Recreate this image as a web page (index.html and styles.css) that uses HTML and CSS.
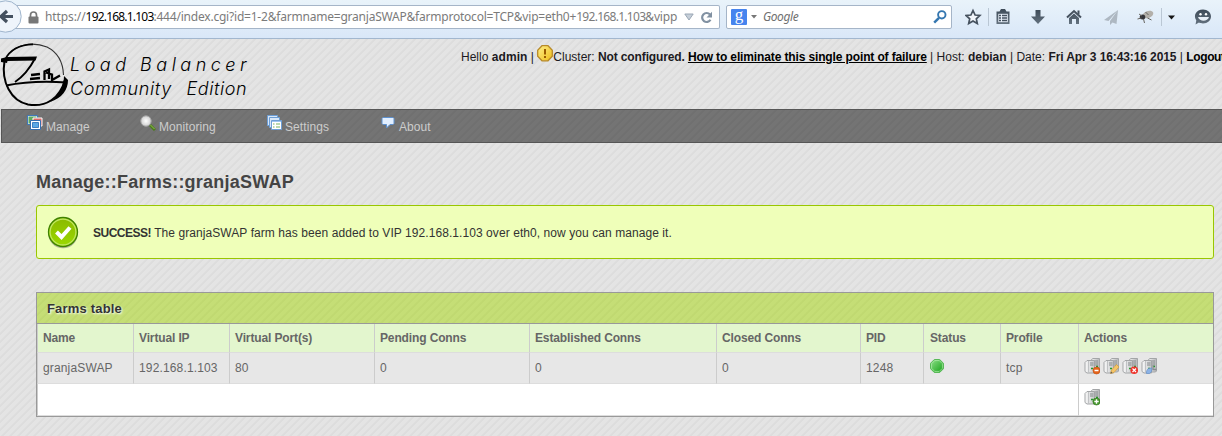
FILE: index.html
```html
<!DOCTYPE html>
<html lang="en">
<head>
<meta charset="utf-8">
<title>Zen Load Balancer</title>
<link rel="stylesheet" href="styles.css">
</head>
<body>
<svg class="defs" width="0" height="0">
  <defs>
    <linearGradient id="steel" x1="0" x2="0" y1="0" y2="1"><stop offset="0" stop-color="#3e4b58"/><stop offset="1" stop-color="#64727f"/></linearGradient>
    <linearGradient id="box" x1="0" x2="1"><stop offset="0" stop-color="#f4f4f4"/><stop offset="1" stop-color="#b2b4b6"/></linearGradient>
    <linearGradient id="front" x1="0" x2="1"><stop offset="0" stop-color="#fafafa"/><stop offset="1" stop-color="#c4c6c8"/></linearGradient>
    <linearGradient id="lime" x1="0" x2="0" y1="0" y2="1"><stop offset="0" stop-color="#8ab900"/><stop offset="1" stop-color="#9bd900"/></linearGradient>
    <linearGradient id="led" x1="0" x2="1" y1="0" y2="1"><stop offset="0" stop-color="#8fe08a"/><stop offset="1" stop-color="#14a016"/></linearGradient>
    <radialGradient id="lens"><stop offset="0" stop-color="#fff"/><stop offset="1" stop-color="#cfcfcf"/></radialGradient>
    <linearGradient id="gold" x1="0" x2="1" y1="0" y2="1"><stop offset="0" stop-color="#fff08a"/><stop offset="1" stop-color="#eebb18"/></linearGradient>
    <g id="servers">
      <path d="M7.500 1.500 9 .5h6.500V13l-1 1h-7z" fill="url(#box)" stroke="#a3a5a7"/>
      <path d="M10.500 3H14M10.500 5H14M10.500 7H14" stroke="#85898c"/>
      <path d="M1 4.500 3 2.500h7.500V15H3l-2-1.500z" fill="url(#front)" stroke="#a3a5a7"/>
      <path d="M4.500 3v12" stroke="#c0c2c4"/>
      <path d="M6 5h3.500M6 7h3.500" stroke="#85898c"/>
      <path d="M7 10.500h2M12 8.500h2" stroke="#249a2c" stroke-width="1.700" fill="none"/>
    </g>
  </defs>
</svg>

<div class="toolbar">
  <div class="address">
    <svg class="lock" width="11" height="13" viewBox="0 0 11 13"><path d="M2.500 7V4a3 3 0 0 1 6 0v3" fill="none" stroke="#777" stroke-width="1.700"/><rect x=".5" y="5.500" width="10" height="7" rx="1" fill="#777"/></svg>
    <div class="url"><span class="scheme">https://</span><b>192.168.1.103</b>:444/index.cgi?id=1-2&amp;farmname=granjaSWAP&amp;farmprotocol=TCP&amp;vip=eth0+<span class="ip">192.168.1.103</span>&amp;vipp</div>
    <svg class="drop" width="10" height="8" viewBox="0 0 10 8"><path d="M.8 1h8.400L5 7z" fill="#c5ced8" stroke="#9aa7b5"/></svg>
    <svg class="reload" width="13" height="13" viewBox="0 0 13 13"><path d="M10 3.500A4.500 4.500 0 1 0 10.500 8.800" fill="none" stroke="#8191a2" stroke-width="2.200"/><path d="M12 .8v5.700H6.500z" fill="#8191a2"/></svg>
  </div>
  <svg class="back" width="23" height="36" viewBox="0 0 23 36"><circle cx="5.500" cy="16.500" r="15.700" fill="#eef4fb" stroke="#9eb4cc"/><path d="M13 16.500H1M7 11l-6 5.500L7 22" fill="none" stroke="#44505f" stroke-width="3.200"/></svg>
  <div class="search">
    <span class="engine">g</span>
    <svg width="6" height="4" viewBox="0 0 6 4"><path d="M0 0h6L3 3.500z" fill="#777"/></svg>
    <span class="hint">Google</span>
    <svg width="14" height="14" viewBox="0 0 14 14"><circle cx="8.800" cy="4.800" r="3.700" fill="none" stroke="#3577b0" stroke-width="1.900"/><path d="M6 7.800 1.200 12.600" stroke="#3577b0" stroke-width="2.500"/></svg>
  </div>
  <svg class="tools" width="257" height="30" viewBox="0 0 257 30">
    <g fill="url(#steel)">
      <path d="M8 5.500l2.100 4.500 4.800.5-3.600 3.300 1 4.700-4.300-2.500-4.300 2.500 1-4.700L1.100 10.500l4.800-.5z" fill="#f2f6fb" stroke="#46525f" stroke-width="1.700"/>
      <path d="M31.500 6.500h3l1.500-2.500h4l1.500 2.500h3V19h-13z"/><path d="M33.300 8.800h9.500v8.400h-9.500z" fill="#e7eff8"/><path d="M34 10.500h2m1 0h5m-8 2.500h2m1 0h5m-8 2.500h2m1 0h5" stroke="#46525f" stroke-width="1.500"/>
      <path d="M70.500 5h5v6.500H80L73 19l-7-7.500h4.500z"/>
      <path d="M102 12.500 109 6l7 6.500" fill="none" stroke="#46525f" stroke-width="2"/><path d="M104 13 109 8.500l5 4.500v6h-3v-5h-4v5h-3zM112.500 5.500h2v4h-2z"/>
      <path d="M153 5 139 15l4.500 1zM153 5l-8 11v4l2.500-2.500 4 1.500z" fill="#aeb8c2"/>
      <ellipse cx="183" cy="9.500" rx="5.500" ry="3.500" transform="rotate(-20 183 9.500)" fill="#b3b0aa"/><ellipse cx="177.500" cy="12" rx="2.800" ry="2.500" fill="#34353a"/>
      <path d="M174 9l3 2M172.500 14l4-1m2 1 1 4m3-5 4 2m-6-8 3 3" stroke="#66645f" fill="none"/>
      <path d="M203 10.500h7l-3.500 4z" fill="#151515"/>
      <path d="M238 4.500c4.500 0 8 3 8 7s-3.500 7-8 7c-1.500 0-3-.3-4-.9l-3.500 1.900.8-4C228 10.500 231 4.500 238 4.500z"/>
      <circle cx="235.500" cy="9.300" r="1.200" fill="#fff"/><circle cx="241" cy="9.300" r="1.200" fill="#fff"/><path d="M233 12h11c-1.500 5-9.500 5-11 0z" fill="#e8eff7"/>
    </g>
    <path d="M23.500 3v18M196.500 3v18" stroke="#bac7d4"/>
  </svg>
</div>

<div class="header">
  <svg class="logo" width="70" height="66" viewBox="0 0 70 66">
    <path d="M9 11C17 1 33-1.500 47 4c10 5 16 15 16.500 28" fill="none" stroke="#333" stroke-width="1.100"/>
    <path d="M5 17C9 7 20 1.500 33 1.300" fill="none" stroke="#000" stroke-width="1.700"/>
    <path d="M4.500 18C1 39 11 58 28 61.500c18 3 32-6 37-25" fill="none" stroke="#000" stroke-width="2"/>
    <path d="M64 33c0 10-4 19-14 26 12-4 18-12 18-22z"/>
    <path d="M1 15.500 7 14l30-.5-1.500 4-28 .5-.5 2-6-1z"/>
    <path d="M35 15.500C30 25 24 33 15 39M6 42.500c17-3.500 40-4.500 61-3" fill="none" stroke="#000" stroke-width="1.900"/>
    <path d="M31 32l9-1m-10 5 10-1M44.500 37V28.500l4.500-2V36M46 29.500l6 2v5.500l8-4.500" fill="none" stroke="#000" stroke-width="2.300"/>
  </svg>
  <div class="brand"><div class="brand-top">Load Balancer</div><div class="brand-sub">Community Edition</div></div>
  <div class="status">Hello <b class="user">admin</b> | <svg class="warn" width="16" height="17" viewBox="0 0 16 17"><path d="M5 .7h6l4.300 4.500v6L11 15.800H5L.7 11.200v-6z" fill="url(#gold)" stroke="#b88a28" stroke-width="1.300"/><path d="M8 4v5.500M8 11v2" stroke="#9a5b00" stroke-width="2"/></svg>Cluster: <b class="cluster">Not configured. <a>How to eliminate this single point of failure</a></b> | Host: <b>debian</b> | Date: <b class="date">Fri Apr 3 16:43:16 2015</b> | <b class="logout">Logout</b></div>
</div>

<div class="nav">
  <div class="item manage"><svg width="16" height="16" viewBox="0 0 16 16"><path d="M1 1h9v8H1z" fill="#62a961" stroke="#e8f1fb"/><path d="M.5.500h10v9H.5z" fill="none" stroke="#3f79ba"/><path d="M6 3h9v8H6z" fill="#d96a6a" stroke="#fff"/><path d="M3.500 5.500h10v9h-10z" fill="#fff" stroke="#356eae"/><path d="M5.500 7.500h6v5h-6z" fill="#5ba8e4" stroke="#3b7fc2"/></svg>Manage</div>
  <div class="item monitoring"><svg width="16" height="16" viewBox="0 0 16 16"><path d="M10 10l5 5" stroke="#4c7c1d" stroke-width="3"/><path d="M10.500 10l4 4" stroke="#92bd54"/><circle cx="6" cy="6" r="5.200" fill="url(#lens)" stroke="#a4a4a4"/></svg>Monitoring</div>
  <div class="item settings"><svg width="15" height="16" viewBox="0 0 15 16"><g fill="#d8e7f9" stroke="#6d9ed5"><path d="M.5.500h10v10H.5z"/><path d="M2.500 2.500h10v10h-10z"/><path d="M4.500 5.500h10v9h-10z" fill="#fff"/></g><path d="M5 6.500h9" stroke="#9cc5f0"/><path d="M6 9h1.500M9 9h4M6 12h1.500M9 12h4" stroke="#75b25e"/></svg>Settings</div>
  <div class="item about"><svg width="14" height="16" viewBox="0 0 14 16"><path d="M2 2.500h10l1 1v5l-1 1H9L5.500 13V9.500H2l-1-1v-5z" fill="#e2efff" stroke="#5d91d0"/></svg>About</div>
</div>

<div class="content">
  <h1>Manage::Farms::granjaSWAP</h1>
  <div class="success">
    <svg width="32" height="33" viewBox="0 0 32 33"><circle cx="16" cy="17.500" r="14.800" fill="#777" opacity=".55"/><circle cx="16" cy="16" r="14.500" fill="url(#lime)" stroke="#3f8200" stroke-width="1.300"/><circle cx="16" cy="16" r="12.900" fill="none" stroke="#c0e764" stroke-width="1.200"/><path d="M9.500 16l5 5 8.500-9.500" fill="none" stroke="#fff" stroke-width="4"/></svg>
    <p><b>SUCCESS!</b> The granjaSWAP farm has been added to VIP 192.168.1.103 over eth0, now you can manage it.</p>
  </div>
  <div class="panel">
    <h2>Farms table</h2>
    <div class="row head"><span>Name</span><span>Virtual IP</span><span>Virtual Port(s)</span><span>Pending Conns</span><span>Established Conns</span><span>Closed Conns</span><span>PID</span><span class="state">Status</span><span>Profile</span><span>Actions</span></div>
    <div class="row data"><span>granjaSWAP</span><span>192.168.1.103</span><span>80</span><span>0</span><span>0</span><span>0</span><span>1248</span><span class="led"><svg width="14" height="14" viewBox="0 0 14 14"><path d="M4.300.5h5.400l3.800 3.800v5.400l-3.800 3.800H4.300L.5 9.700V4.300z" fill="url(#led)" stroke="#58b957"/><path d="M4.700 1.600h4.600l3.100 3.100v4.600l-3.100 3.100H4.700L1.600 9.300V4.700z" fill="none" stroke="#b5edb0" opacity=".7"/></svg></span><span>tcp</span>
      <span class="actions">
        <svg width="16" height="17" viewBox="0 0 16 17"><use href="#servers"/><circle cx="12.500" cy="12.500" r="3.500" fill="#e5641b" stroke="#c24b0c" stroke-width=".6"/><path d="M10.500 12.500h4" stroke="#fff" stroke-width="1.500"/></svg>
        <svg width="16" height="17" viewBox="0 0 16 17"><use href="#servers"/><path d="M7.500 15.500l1-3.500 5-5.500 2.500 2.500-5 5.500z" fill="#f4c568" stroke="#d39b3a" stroke-width=".7"/><path d="M7.500 15.500l2-.5-1.500-1.500z" fill="#555"/></svg>
        <svg width="16" height="17" viewBox="0 0 16 17"><use href="#servers"/><circle cx="12.200" cy="12.200" r="3.800" fill="#ee332b"/><path d="M10.500 10.500 14 14m0-3.500L10.500 14" stroke="#fff" stroke-width="1.200"/></svg>
        <svg width="16" height="17" viewBox="0 0 16 17"><use href="#servers"/><path d="M5.500 15.500c-.3-2 .5-4 2-5l3.500-.5-.5 3.500-2 2z" fill="#8bb2e5" stroke="#6691c9" stroke-width=".7"/><path d="M12 7.500v4h3.500" fill="none" stroke="#8a8d90" stroke-width="1.300"/></svg>
      </span>
    </div>
    <div class="row foot"><span class="wide"></span><span class="actions"><svg width="16" height="17" viewBox="0 0 16 17"><use href="#servers"/><circle cx="12.500" cy="12.500" r="3.600" fill="#47952d" stroke="#2f7b1b" stroke-width=".6"/><path d="M10.300 12.500h4.400m-2.200-2.200v4.400" stroke="#fff" stroke-width="1.400"/></svg></span></div>
  </div>
</div>
</body>
</html>
```

FILE: styles.css
```css
* { box-sizing: border-box; }
body {
  margin: 0;
  width: 1222px;
  height: 436px;
  overflow: hidden;
  font: 12px/16px "Liberation Sans", Arial, sans-serif;
  color: #1c1a22;
  background: repeating-linear-gradient(135deg, #e4e4e4 0 3px, #dddddd 3.8px 5px, #e4e4e4 5.657px);
}
svg { display: block; flex: none; }
.defs { position: absolute; }

.toolbar {
  position: relative;
  display: flex;
  height: 39px;
  padding-top: 5px;
  background: linear-gradient(#e9f3fa, #d9e7f8);
  border-bottom: 1px solid #a2b7cf;
}
.address {
  display: flex;
  width: 720px;
  height: 24px;
  padding: 0 7px 0 28px;
  align-items: center;
  background: #fff;
  border: 1px solid #a5b5c8;
  border-left: 0;
  border-radius: 2px;
}
.url {
  width: 634px;
  margin-left: 6px;
  white-space: nowrap;
  font: 12px/20px "Noto Sans", sans-serif;
  letter-spacing: -.21px;
  color: #7b7b7b;
}
.scheme { letter-spacing: -.1px; }
.url b { font-weight: normal; color: #000; letter-spacing: -.8px; }
.ip { letter-spacing: -.7px; }
.drop { margin-left: 7px; }
.reload { margin-left: 6px; }
.back { position: absolute; left: 0; top: 0; }
.search {
  display: flex;
  align-items: center;
  width: 226px;
  height: 24px;
  margin-left: 6px;
  padding: 0 4px;
  background: #fff;
  border: 1px solid #a5b5c8;
  border-radius: 2px;
}
.engine {
  width: 16px;
  height: 16px;
  margin-right: 4px;
  border-radius: 1px;
  background: #4684ee;
  color: #fff;
  font: 17px/11px "Liberation Serif", serif;
  text-align: center;
}
.hint { flex: 1; margin-left: 6px; font: italic 12px/20px "Noto Sans", sans-serif; letter-spacing: -.4px; color: #707070; }
.tools { margin-left: 13px; }

.header { display: flex; height: 70px; }
.logo { margin: 4px 0 0 0; }
.brand { flex: none; width: 200px; font-family: Inter, "Liberation Sans", sans-serif; font-style: italic; font-weight: 300; color: #000; white-space: nowrap; }
.brand-top { margin-top: 14px; font-size: 18px; line-height: 24px; letter-spacing: 4.5px; }
.brand-sub { font-size: 18px; line-height: 24px; letter-spacing: .6px; word-spacing: 9px; }
.status { margin: 6px 0 0 191px; height: 22px; white-space: nowrap; }
.status a { color: #000; text-decoration: underline; }
.user { letter-spacing: .1px; }
.cluster { letter-spacing: -.13px; }
.date { letter-spacing: -.1px; }
.warn { display: inline-block; vertical-align: -1px; }
.status .logout { color: #000; letter-spacing: -.35px; }

.nav {
  display: flex;
  height: 34px;
  margin-left: 1px;
  border: 1px solid #565656;
  border-right: 0;
  background: repeating-linear-gradient(135deg, #747474 0 3px, #707070 3.8px 5px, #747474 5.657px);
  color: #ccc;
}
.item { display: flex; gap: 3px; padding-top: 5px; line-height: 24px; letter-spacing: .08px; }
.manage { margin-left: 25px; width: 113px; }
.monitoring { width: 127px; }
.settings { width: 114px; }
.about { gap: 4px; }

.content { padding: 30px 8px 0 36px; }
h1 { margin: 0; font-size: 18px; line-height: 18px; height: 32px; letter-spacing: .24px; color: #444; }
.success {
  display: flex;
  align-items: center;
  height: 54px;
  padding-left: 10px;
  background: #efffb9;
  border: 1px solid #99c600;
  border-radius: 3px;
}
.success p { margin: 2px 0 0 14px; color: #333; letter-spacing: .07px; }
.success b { letter-spacing: -.5px; }
.panel { margin-top: 33px; height: 125px; border: 1px solid #999; background: #fff; color: #666; }
h2 {
  margin: 0;
  height: 31px;
  padding-left: 10px;
  font-size: 13px;
  line-height: 31px;
  letter-spacing: .18px;
  color: #333;
  text-shadow: 1px 1px 2px #fff;
  border-bottom: 1px solid #999;
  background: repeating-linear-gradient(135deg, #c5de76 0 3px, #c0d971 3.8px 5px, #c5de76 5.657px);
}
.row { display: grid; grid-template-columns: 96px 96px 145px 155px 187px 144px 63px 77px 78px 1fr; }
.row > span { padding-left: 5px; border-left: 1px solid #ccc; border-bottom: 1px solid #ddd; }
.head { height: 29px; line-height: 28px; font-weight: bold; letter-spacing: -.13px; background: #e3f6ce; }
.data { height: 31px; line-height: 30px; letter-spacing: .15px; background: #e7e7e7; }
.foot { height: 32px; }
.wide { grid-column: span 9; }
.row > .state { padding-left: 6px; }
.row > .led { padding: 6px 0 0 6px; }
.row > .actions { display: flex; gap: 3px; padding-top: 5px; }
```
